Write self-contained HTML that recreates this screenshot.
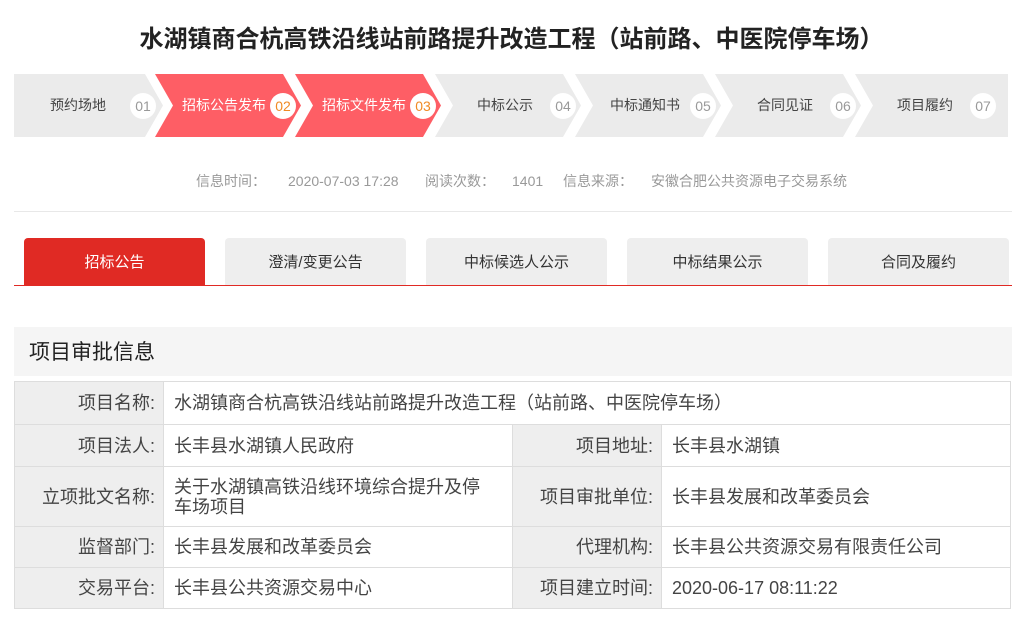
<!DOCTYPE html>
<html><head><meta charset="utf-8"><style>
*{margin:0;padding:0;box-sizing:border-box}
body{width:1023px;height:627px;background:#fff;font-family:"Liberation Sans","Noto Sans CJK SC",sans-serif;color:#333;position:relative;overflow:hidden}
.t{position:absolute;left:0;width:1023px;top:24px;text-align:center;font-size:24px;font-weight:bold;color:#222;line-height:32px}
.info span{position:absolute;top:172px;font-size:14px;color:#999;white-space:nowrap;line-height:18px}
.hr{position:absolute;top:211px;left:14px;width:998px;height:1px;background:#e8e8e8}
.tab{position:absolute;top:238px;width:181px;height:47px;background:#eee;border-radius:4px 4px 0 0;text-align:center;line-height:50px;font-size:15px;color:#333}
.tab.a{background:#e02a24;color:#fff}
.rl{position:absolute;top:285px;left:14px;width:998px;height:1px;background:#e02a24}
.sec{position:absolute;top:327px;left:14px;width:998px;height:49px;background:#f5f5f5;font-size:21px;line-height:52px;padding-left:15px;color:#222}
table{position:absolute;top:381px;left:14px;width:997px;border-collapse:collapse;font-size:18px;color:#444}
td{border:1px solid #ddd;padding:0 10px;line-height:20px}
td.l{background:#eee;text-align:right;padding-right:8px}
</style></head><body>
<div class="t">水湖镇商合杭高铁沿线站前路提升改造工程（站前路、中医院停车场）</div>
<svg style="position:absolute;left:0;top:0" width="1023" height="160" font-family="Liberation Sans,Noto Sans CJK SC,sans-serif">
<g>
<polygon points="14,74 145,74 163,105.5 145,137 14,137" fill="#ebebeb"/>
<polygon points="155,74 283,74 301,105.5 283,137 155,137 173,105.5" fill="#fe5e65"/>
<polygon points="295,74 423,74 441,105.5 423,137 295,137 313,105.5" fill="#fe5e65"/>
<polygon points="435,74 563,74 581,105.5 563,137 435,137 453,105.5" fill="#ebebeb"/>
<polygon points="575,74 703,74 721,105.5 703,137 575,137 593,105.5" fill="#ebebeb"/>
<polygon points="715,74 843,74 861,105.5 843,137 715,137 733,105.5" fill="#ebebeb"/>
<polygon points="855,74 1008,74 1008,137 855,137 873,105.5" fill="#ebebeb"/>
</g>
<g font-size="14" fill="#444">
<text x="50" y="110">预约场地</text>
<text x="182" y="110" fill="#fff">招标公告发布</text>
<text x="322" y="110" fill="#fff">招标文件发布</text>
<text x="477" y="110">中标公示</text>
<text x="610" y="110">中标通知书</text>
<text x="757" y="110">合同见证</text>
<text x="897" y="110">项目履约</text>
</g>
<g fill="#fff">
<circle cx="143" cy="106" r="13"/><circle cx="283" cy="106" r="13"/><circle cx="423" cy="106" r="13"/>
<circle cx="563" cy="106" r="13"/><circle cx="703" cy="106" r="13"/><circle cx="843" cy="106" r="13"/><circle cx="983" cy="106" r="13"/>
</g>
<g font-size="14" fill="#999" text-anchor="middle">
<text x="143" y="111">01</text><text x="283" y="111" fill="#f08a24">02</text><text x="423" y="111" fill="#f08a24">03</text>
<text x="563" y="111">04</text><text x="703" y="111">05</text><text x="843" y="111">06</text><text x="983" y="111">07</text>
</g>
</svg>
<div class="info">
<span style="left:196px">信息时间：</span><span style="left:288px">2020-07-03 17:28</span>
<span style="left:425px">阅读次数：</span><span style="left:512px">1401</span>
<span style="left:563px">信息来源：</span><span style="left:651px">安徽合肥公共资源电子交易系统</span>
</div>
<div class="hr"></div>
<div class="tab a" style="left:24px">招标公告</div>
<div class="tab" style="left:225px">澄清/变更公告</div>
<div class="tab" style="left:426px">中标候选人公示</div>
<div class="tab" style="left:627px">中标结果公示</div>
<div class="tab" style="left:828px">合同及履约</div>
<div class="rl"></div>
<div class="sec">项目审批信息</div>
<table>
<colgroup><col style="width:149px"><col style="width:349px"><col style="width:149px"><col></colgroup>
<tr style="height:43px"><td class="l">项目名称:</td><td colspan="3">水湖镇商合杭高铁沿线站前路提升改造工程（站前路、中医院停车场）</td></tr>
<tr style="height:42px"><td class="l">项目法人:</td><td>长丰县水湖镇人民政府</td><td class="l">项目地址:</td><td>长丰县水湖镇</td></tr>
<tr style="height:60px"><td class="l">立项批文名称:</td><td style="padding-right:18px">关于水湖镇高铁沿线环境综合提升及停车场项目</td><td class="l">项目审批单位:</td><td>长丰县发展和改革委员会</td></tr>
<tr style="height:41px"><td class="l">监督部门:</td><td>长丰县发展和改革委员会</td><td class="l">代理机构:</td><td>长丰县公共资源交易有限责任公司</td></tr>
<tr style="height:41px"><td class="l">交易平台:</td><td>长丰县公共资源交易中心</td><td class="l">项目建立时间:</td><td>2020-06-17 08:11:22</td></tr>
</table>
</body></html>
